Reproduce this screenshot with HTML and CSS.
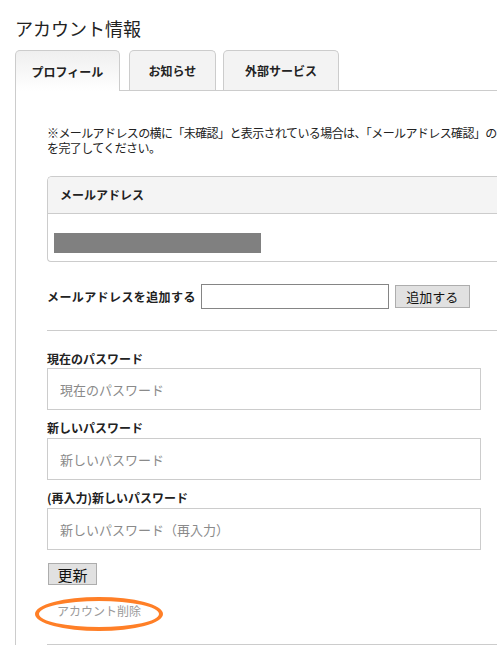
FILE: index.html
```html
<!DOCTYPE html>
<html lang="ja">
<head>
<meta charset="utf-8">
<title>アカウント情報</title>
<link rel="stylesheet" href="styles.css">
</head>
<body>
<div class="page">
  <h1 class="title">アカウント情報</h1>
  <div class="tabs">
    <div class="tab tab-active tab-profile">プロフィール</div>
    <div class="tab tab-news">お知らせ</div>
    <div class="tab tab-external">外部サービス</div>
  </div>
  <div class="panel">
    <p class="note">※メールアドレスの横に「未確認」と表示されている場合は、「メールアドレス確認」の手続き<br>を完了してください。</p>

    <div class="mail-box">
      <div class="mail-head">メールアドレス</div>
      <div class="mail-body"><div class="mail-mask"></div></div>
    </div>

    <form class="add-row">
      <label class="add-label">メールアドレスを追加する</label>
      <input class="add-input" type="text">
      <button class="btn btn-add" type="button">追加する</button>
    </form>

    <hr class="sep">

    <div class="pw-form">
      <label class="pw-label pw-label-first">現在のパスワード</label>
      <input class="pw-input" type="password" placeholder="現在のパスワード">
      <label class="pw-label">新しいパスワード</label>
      <input class="pw-input" type="password" placeholder="新しいパスワード">
      <label class="pw-label">(再入力)新しいパスワード</label>
      <input class="pw-input" type="password" placeholder="新しいパスワード（再入力）">
      <button class="btn btn-update" type="button">更新</button>
    </div>

    <div class="delete-row">
      <a class="delete-link" href="#">アカウント削除</a>
    </div>

    <hr class="sep sep-bottom">
  </div>
</div>
</body>
</html>
```

FILE: styles.css
```css
html, body {
  margin: 0;
  padding: 0;
  overflow: hidden;
  background: #fff;
}

body {
  font-family: "Noto Sans CJK JP", "Noto Sans", sans-serif;
  color: #222;
  font-size: 12px;
}

.page {
  width: 620px;
  padding: 16px 0 0 15px;
}

.title {
  margin: 0 0 10px 0;
  font-size: 18px;
  line-height: 24px;
  font-weight: normal;
  color: #222;
}

.tabs {
  display: flex;
  align-items: flex-end;
  height: 40px;
  border-bottom: 1px solid #ccc;
}

.tab {
  box-sizing: border-box;
  height: 40px;
  margin-right: 9px;
  border: 1px solid #ccc;
  border-bottom: none;
  border-radius: 5px 5px 0 0;
  background: #f3f3f3;
  font-weight: bold;
  font-size: 12px;
  line-height: 40px;
  text-align: center;
  color: #222;
}

.tab-active {
  height: 41px;
  margin-bottom: -1px;
  background: linear-gradient(#efefef, #fff);
  line-height: 41px;
}

.tab-profile { width: 105px; margin-right: 9px; }
.tab-news { width: 87px; margin-right: 7px; }
.tab-external { width: 116px; }

.panel {
  border-left: 1px solid #ccc;
  padding: 34px 0 6px 31px;
}

.note {
  margin: 0;
  font-size: 12px;
  line-height: 15px;
  letter-spacing: -0.6px;
  white-space: nowrap;
  color: #222;
}

.mail-box {
  margin-top: 21px;
  border: 1px solid #ccc;
  border-right: none;
  border-radius: 5px 0 0 4px;
  overflow: hidden;
}

.mail-head {
  height: 36px;
  line-height: 36px;
  padding-left: 12px;
  background: #f4f4f4;
  border-bottom: 1px solid #ccc;
  font-weight: bold;
  font-size: 12px;
}

.mail-body {
  padding: 19px 0 8px 6px;
}

.mail-mask {
  width: 207px;
  height: 20px;
  background: #808080;
}

.add-row {
  display: flex;
  align-items: center;
  margin: 22px 0 0 0;
}

.add-label {
  font-weight: bold;
  font-size: 12px;
  letter-spacing: 0.4px;
  margin-right: 5px;
}

.add-input {
  box-sizing: border-box;
  width: 188px;
  height: 25px;
  margin: 0 6px 0 0;
  border: 1px solid #858585;
  padding: 0 4px;
}

.btn {
  box-sizing: border-box;
  background: #e1e1e1;
  border: 1px solid #adadad;
  border-radius: 0;
  font-family: "Noto Sans CJK JP", sans-serif;
  color: #111;
  padding: 0;
  line-height: 1;
}

.btn-add {
  width: 75px;
  height: 23px;
  font-size: 13px;
}

.sep {
  margin: 21px 0 0 0;
  border: none;
  border-top: 1px solid #ccc;
  height: 0;
}

.pw-form {
  display: flex;
  flex-direction: column;
  align-items: flex-start;
}

.pw-label {
  display: block;
  padding-top: 10px;
  margin-bottom: 2px;
  font-weight: bold;
  font-size: 12px;
  line-height: 16px;
}

.pw-label-first {
  padding-top: 20px;
  margin-bottom: 1px;
}

.pw-input {
  box-sizing: border-box;
  width: 434px;
  height: 42px;
  margin: 0;
  border: 1px solid #ccc;
  padding: 0 12px;
  font-family: "Noto Sans CJK JP", sans-serif;
  font-size: 13px;
}

.pw-input::placeholder {
  color: #8a8a8a;
}

.btn-update {
  margin: 13px 0 0 1px;
  width: 49px;
  height: 22px;
  font-size: 15px;
}

.delete-row {
  margin-top: 18px;
  padding-left: 10px;
  line-height: 16px;
}

.delete-link {
  position: relative;
  display: inline-block;
  color: #9a9a9a;
  font-size: 12px;
  text-decoration: none;
}

.delete-link::after {
  content: "";
  position: absolute;
  left: -22px;
  top: -6px;
  width: 128px;
  height: 34px;
  box-sizing: border-box;
  border: 4px solid #ff7f27;
  border-radius: 50%;
}

.sep-bottom {
  margin-top: 25px;
}
```
